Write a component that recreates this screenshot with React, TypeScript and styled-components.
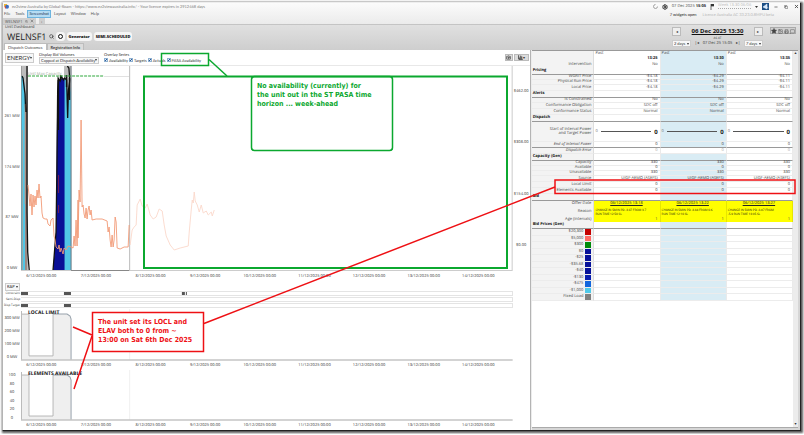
import React from "react";
import styled, { createGlobalStyle } from "styled-components";
import { Search, Star, Image as ImageIcon, Printer, MessageSquare, Settings, Camera, BarChart3, Minus, Copy, X } from "lucide-react";

const Global = createGlobalStyle`
  * { box-sizing: border-box; }
  html, body { margin: 0; background: #fff; }
  body {
    font-family: "Open Sans", "Noto Sans", sans-serif;
    font-size: 4px;
    line-height: 5px;
    color: #333;
    text-rendering: geometricPrecision;
  }
  button, select, input { font: inherit; color: inherit; margin: 0; padding: 0; border: 0; background: none; }
  svg { display: block; flex-shrink: 0; }
`;

const narrow = 'Lato, "Open Sans", sans-serif';

const Page = styled.div`
  position: relative;
  padding: 2px 3px 3px 2px;
`;

const Window = styled.div`
  display: flex;
  flex-direction: column;
  border: 1px solid #b4b4b4;
  border-top-color: #eee;
  border-right: 1px solid #222;
  border-bottom: 1px solid #222;
  box-shadow: 1px 1px 2px 1px #555;
  background: #d6d6d6;
`;

const TopArea = styled.header`
  display: flex;
  justify-content: space-between;
  height: 22px;
  background: linear-gradient(#fbfbfb, #ebebeb);
  border-bottom: 1px solid #c4c4c4;
`;

const Stack = styled.div`
  display: flex;
  flex-direction: column;
`;

const Bar = styled.div<{ $h: number; $gap?: number; $left?: number }>`
  display: flex;
  align-items: center;
  height: ${(p) => p.$h}px;
  gap: ${(p) => p.$gap ?? 0}px;
  padding-left: ${(p) => p.$left ?? 0}px;
  white-space: nowrap;
`;

const WindowTitle = styled.span`
  font-family: ${narrow};
  color: #808080;
`;

const MenuButton = styled.button<{ $active?: boolean }>`
  height: 6px;
  padding: 0 1px;
  font-family: ${narrow};
  line-height: 4px;
  color: ${(p) => (p.$active ? "#235" : "#555")};
  background: ${(p) => (p.$active ? "#b5dcf3" : "transparent")};
  outline: ${(p) => (p.$active ? "1px solid #6db4df" : "none")};
`;

const DocTab = styled.button`
  display: flex;
  align-items: center;
  gap: 2px;
  height: 6px;
  padding: 0 2px;
  color: #555;
  background: #cfcfcf;
`;

const Status = styled.div`
  display: flex;
  align-items: center;
  gap: 4px;
  height: 7px;
  padding-right: 1px;
  color: #444;
  white-space: nowrap;
`;

const Strong = styled.span`
  font-weight: 700;
  color: #222;
`;

const Track = styled.div`
  width: 33px;
  height: 5px;
  border-bottom: 1px dotted #aaa;
  color: #bbb;
  line-height: 4px;
  text-align: center;
  white-space: nowrap;
`;

const PlainButton = styled.button`
  display: flex;
  align-items: center;
  justify-content: center;
  min-width: 6px;
  height: 6px;
`;

const Notes = styled.div`
  display: flex;
  gap: 6px;
  height: 9px;
  align-items: center;
  padding-left: 17px;
  font-family: ${narrow};
  color: #222;
  white-space: nowrap;
`;

const Faded = styled.span`
  color: #b8b8b8;
`;

const UnitHeader = styled.section`
  display: flex;
  justify-content: space-between;
  height: 25px;
  background: linear-gradient(#e0e0e0, #cecece);
`;

const UnitName = styled.h1`
  margin: 0;
  font-size: 9px;
  line-height: 12px;
  font-weight: 400;
  color: #222;
`;

const Pill = styled.button<{ $round?: boolean }>`
  display: flex;
  align-items: center;
  justify-content: center;
  height: 9px;
  padding: 0 ${(p) => (p.$round ? 1 : 2)}px;
  border-radius: 3px;
  background: #f6f6f6;
  color: #111;
  font-weight: 800;
`;

const Tab = styled.button<{ $active?: boolean }>`
  height: 7px;
  padding: 0 3px;
  border: 1px solid #bdbdbd;
  border-bottom: 0;
  font-family: ${narrow};
  line-height: 5px;
  font-weight: ${(p) => (p.$active ? 400 : 700)};
  background: ${(p) => (p.$active ? "#fff" : "#dcdcdc")};
  color: #444;
`;

const TimeNav = styled.div`
  display: flex;
  gap: 7px;
  padding: 2px 4px 0 0;
`;

const TimeColumn = styled.div`
  display: flex;
  flex-direction: column;
  width: 91px;
`;

const Spread = styled.div`
  display: flex;
  align-items: center;
  justify-content: space-between;
  white-space: nowrap;
`;

const BigTime = styled.button`
  font-size: 6px;
  line-height: 9px;
  font-weight: 700;
  color: #111;
  text-decoration: underline;
`;

const Caption = styled.div`
  text-align: center;
  font-size: 3px;
  line-height: 4px;
`;

const StepButton = styled.button`
  width: 9px;
  height: 9px;
  border: 1px solid #bbb;
  background: #eee;
  line-height: 4px;
`;

const IconGroup = styled.div`
  display: flex;
  height: 7px;
  border: 1px solid #aaa;
  background: #d0d0d0;
  color: #444;
`;

const Field = styled.span<{ $w: number; $h: number; $size?: number }>`
  position: relative;
  display: inline-flex;
  align-items: center;
  width: ${(p) => p.$w}px;
  height: ${(p) => p.$h}px;
  border: 1px solid #ccc;
  background: #f7f7f7;
  font-family: ${narrow};
  font-size: ${(p) => p.$size ?? 4}px;
  color: #333;
  &::after {
    content: "";
    position: absolute;
    right: 1px;
    border: 1px solid transparent;
    border-top: 2px solid #333;
    border-bottom: 0;
    pointer-events: none;
  }
`;

const Select = styled.select`
  appearance: none;
  width: 100%;
  height: 100%;
  padding-left: 1px;
  line-height: 5px;
`;

const Main = styled.main`
  display: grid;
  grid-template-columns: 526fr 2px 268fr;
`;

const Left = styled.section`
  min-width: 0;
  background: #fff;
`;

const Splitter = styled.div`
  background: #ececec;
  border-left: 1px solid #b4b4b4;
`;

const Toolbar = styled.div`
  display: flex;
  align-items: center;
  gap: 5px;
  height: 16px;
  padding: 0 1px 0 2px;
  border-bottom: 1px solid #e8e8e8;
  font-family: ${narrow};
`;

const LabelText = styled.label`
  line-height: 5px;
  height: 5px;
  white-space: nowrap;
`;

const Check = styled.label`
  display: flex;
  align-items: center;
  gap: 1px;
  white-space: nowrap;
`;

const Tick = styled.input`
  appearance: none;
  width: 4px;
  height: 4px;
  border: 1px solid #8fb0d0;
  background: #dfeaf6;
  &:checked { background: linear-gradient(135deg, #dfeaf6 40%, #2c5c99 40% 65%, #dfeaf6 65%); }
`;

const ToolIcons = styled.div`
  display: flex;
  gap: 1px;
  margin-left: auto;
`;

const ToolButton = styled.button<{ $w: number }>`
  display: flex;
  align-items: center;
  justify-content: center;
  width: ${(p) => p.$w}px;
  height: 7px;
  border: 1px solid #bbb;
  background: #dcdcdc;
  color: #333;
`;

const ChartRow = styled.div`
  display: grid;
  grid-template-columns: 18px minmax(0, 1fr) 17px;
`;

const Axis = styled.div<{ $top: number; $bottom: number }>`
  display: flex;
  flex-direction: column;
  justify-content: space-between;
  padding: ${(p) => p.$top}px 1px ${(p) => p.$bottom}px 1px;
  line-height: 4px;
  text-align: center;
  white-space: nowrap;
`;

const Plot = styled.div<{ $h: number }>`
  position: relative;
  height: ${(p) => p.$h}px;
  svg { width: 100%; height: 100%; }
`;

const PlotTitle = styled.h2<{ $soft?: boolean }>`
  position: absolute;
  top: ${(p) => (p.$soft ? 6 : 2)}px;
  left: 7px;
  margin: 0;
  font-size: ${(p) => (p.$soft ? 4 : 5)}px;
  line-height: 5px;
  font-weight: ${(p) => (p.$soft ? 400 : 700)};
  color: ${(p) => (p.$soft ? "#9aa89a" : "#111")};
  white-space: nowrap;
`;

const Dates = styled.div<{ $h: number }>`
  display: grid;
  grid-template-columns: repeat(9, 1fr);
  margin: 0 24px 0 11px;
  height: ${(p) => p.$h}px;
  line-height: ${(p) => p.$h}px;
  text-align: center;
  white-space: nowrap;
`;

const StripLabel = styled.span`
  font-size: 3px;
  line-height: 5px;
  text-align: right;
  padding-right: 1px;
  white-space: nowrap;
`;

const Strip = styled.div`
  height: 5px;
  margin-bottom: 1px;
  border: 1px solid #e4e4e4;
  border-left: 0;
  svg { width: 100%; height: 100%; }
`;

const Right = styled.section`
  display: grid;
  grid-template-columns: minmax(0, 1fr) 5px;
  min-width: 0;
  margin-right: 2px;
  margin-bottom: 2px;
  border-top: 1px solid #999;
  border-bottom: 1px solid #aaa;
  background: #fff;
  align-items: start;
`;

const ScrollTrack = styled.div`
  display: flex;
  flex-direction: column;
  justify-content: space-between;
  align-items: center;
  height: 100%;
  background: #ececec;
`;

const Table = styled.table`
  width: 100%;
  table-layout: fixed;
  border-collapse: separate;
  border-spacing: 0;
  line-height: 4px;
  white-space: nowrap;
`;

const LabelCol = styled.col`
  width: 24%;
`;

const Row = styled.tr<{ $h: number; $rule?: boolean; $faint?: boolean }>`
  height: ${(p) => p.$h}px;
  th, td {
    height: ${(p) => p.$h}px;
    border-bottom: ${(p) => (p.$rule ? "1px solid #999" : p.$faint ? "1px solid #ececec" : "0")};
  }
`;

const Label = styled.th<{ $group?: boolean; $italic?: boolean }>`
  padding: 0 ${(p) => (p.$group ? 0 : 2)}px 0 1px;
  text-align: ${(p) => (p.$group ? "left" : "right")};
  font-weight: ${(p) => (p.$group ? 700 : 400)};
  font-style: ${(p) => (p.$italic ? "italic" : "normal")};
  color: ${(p) => (p.$group ? "#111" : "#444")};
  background: #f3f3f3;
  border-right: 1px solid #ddd;
`;

const Cell = styled.td<{ $tone?: "blue" | "yellow"; $align?: string; $bold?: boolean; $dim?: boolean; $small?: boolean }>`
  padding: 0 ${(p) => (p.$small ? 0 : 2)}px 0 1px;
  font-size: ${(p) => (p.$small ? 3 : 4)}px;
  text-align: ${(p) => p.$align ?? "right"};
  font-weight: ${(p) => (p.$bold ? 700 : 400)};
  color: ${(p) => (p.$dim ? "#aaa" : p.$bold || p.$small ? "#111" : "#444")};
  background: ${(p) => (p.$tone === "yellow" ? "#ffff00" : p.$tone === "blue" ? "#d9ecf4" : "#fff")};
  border-right: 1px solid ${(p) => (p.$tone === "yellow" ? "#e6e600" : "#eaeaea")};
`;

const PowerLine = styled.div`
  display: flex;
  align-items: center;
  gap: 3px;
  color: #777;
  &::before { content: "0"; }
`;

const PowerBar = styled.span`
  flex: 1;
  height: 1px;
  background: #555;
`;

const PowerValue = styled.b`
  font-size: 6px;
  line-height: 6px;
  color: #111;
`;

const OfferLink = styled.a`
  color: #222;
  text-decoration: underline;
`;

const PriceLabel = styled.div`
  display: flex;
  align-items: center;
  justify-content: flex-end;
  gap: 2px;
`;

const Swatch = styled.span<{ $color: string; $h: number }>`
  width: 6px;
  height: ${(p) => p.$h}px;
  background: ${(p) => p.$color};
`;

const Overlay = styled.div`
  position: absolute;
  inset: 0;
  pointer-events: none;
  overflow: hidden;
`;

const Lines = styled.svg`
  position: absolute;
  left: 0;
  top: 0;
`;

const Callout = styled.div<{ $x: number; $y: number; $w: number; $h: number; $color: string; $radius?: number }>`
  position: absolute;
  left: ${(p) => p.$x}px;
  top: ${(p) => p.$y}px;
  width: ${(p) => p.$w}px;
  height: ${(p) => p.$h}px;
  padding: 5px;
  border: 1px solid ${(p) => p.$color};
  border-radius: ${(p) => p.$radius ?? 0}px;
  background: #fff;
  color: ${(p) => p.$color};
  font-family: "DejaVu Sans Condensed", "DejaVu Sans", sans-serif;
  font-weight: 700;
  font-size: 7px;
  line-height: 9px;
  white-space: nowrap;
`;

const GREEN = "#0ba82f";
const RED = "#ee1014";

const dates = [6, 7, 8, 9, 10, 11, 12, 13, 14].map((d) => `${d}/12/2025 00:00`);

const trace =
  "28,185 29,195 30,206 31,194 32,215 33,195 34,207 35,196 36,205 37,190 38,198 39,184 40,198 41,196 42,213 43,218 45,219 47,219 48,224 50,226 51,220 53,218 54,236 55,240 56,247 58,249 59,245 60,252 61,248 63,254 64,248 66,250 68,246 71,247 73,248 74,236 75,246 76,220 77,246 78,200 78,238 79,190 80,202 81,120 82,207 83,205 84,214 85,218 86,208 87,219 88,210 89,206 90,215 91,210 92,220 96,219 102,219 107,221 108,232 109,227 110,240 111,247 112,235 113,247 114,240 115,217 116,222 117,248 120,249 124,247 128,247 129,225";
const forecast =
  "130,245 132,230 134,227 136,225 137,205 138,203 140,199 142,206 145,208 147,204 149,211 150,215 153,219 156,217 159,209 162,211 164,225 166,236 170,245 174,250 180,248 188,246 189,232 191,210 192,200 193,203 194,192 195,201 197,205 199,212 201,205 203,213 206,211 208,215 211,212 212,216 214,210";

function DateRow({ h }: { h: number }) {
  return (
    <Dates $h={h}>
      {dates.map((d) => (
        <span key={d}>{d}</span>
      ))}
    </Dates>
  );
}

function MainPlot() {
  return (
    <svg viewBox="21 66 491 205" preserveAspectRatio="none">
      <rect x="21" y="66" width="7" height="205" fill="#bcbcbc" />
      <rect x="64" y="66" width="7" height="205" fill="#bcbcbc" />
      <path d="M21 76h2l2 12v183h-4z" fill="#52c6e6" />
      <path d="M25 90l2 14v167h-2z" fill="#9a8a84" />
      <path d="M22 76l1 2 2 16 .7 18M27 66v146l.7 40 1.500 18" fill="none" stroke="#111" strokeWidth="1.300" />
      <path d="M22.500 130v140M25 104v100" stroke="#d98b6c" strokeWidth=".5" fill="none" />
      <path d="M53 271l3-39 1-120 1-34 2 2 3-2 2 2v191z" fill="#0a0f96" />
      <path d="M64.500 79h2l1 26 2-10 1.500-8v184h-6.500z" fill="#52c6e6" />
      <path d="M53 270l3-38 .8-60 .8-80 .5-14 2 3 1.500-4 2 3 1-2 2 2 1 38 .8-28 1.400-10-1-12-1.500-2" fill="none" stroke="#111" strokeWidth="1.300" />
      <path d="M58.300 80v50" stroke="#111" strokeWidth="1.500" />
      <path d="M60.500 75v5M66.500 75v12M69.500 78v22" stroke="#111" strokeWidth="1.500" />
      <path d="M58.500 175v18M58.500 205v8" stroke="#c0282c" strokeWidth=".6" />
      <path d="M71 66v205" stroke="#6c7780" />
      <path d="M28 76h76" stroke="#2fa83c" strokeDasharray="3 1" />
      <path d="M104 76.500h25" stroke="#ccc" strokeWidth=".6" />
      <path d="M129.500 66v205" stroke="#bbb" />
      <path d="M21.500 66v205" stroke="#888" strokeWidth=".6" />
      <path d="M21 270.500h491M511.500 66v205" stroke="#ccc" fill="none" />
      <path d="M71 270.500h58" stroke="#888" />
      <polyline points={trace} fill="none" stroke="#f29a76" strokeWidth=".9" />
      <polyline points={forecast} fill="none" stroke="#fbd8cb" strokeWidth=".9" />
    </svg>
  );
}

function StepPlot() {
  return (
    <svg viewBox="21 0 491 51" preserveAspectRatio="none">
      <path d="M21 50V5h8v41h24V5h15l3 4v41z" fill="#efefef" />
      <path d="M21 5h8v41h24V5" fill="none" stroke="#a8a8a8" strokeWidth=".8" />
      <path d="M53 5h14l3 2 1 3v40" fill="none" stroke="#98a2ac" />
      <path d="M21.500 2v48" stroke="#bbb" />
      <path d="M129.500 0v50" stroke="#f0f0f0" />
      <path d="M21 50h491" stroke="#c4c4c4" strokeWidth="1.500" />
    </svg>
  );
}

type Values = [string, string, string];
const tones: (undefined | "blue")[] = [undefined, "blue", undefined];

function DataRow({ label, values, h, bold, rule, italic, align, dim, faint = true }: {
  label: string; values: Values; h: number; bold?: boolean; rule?: boolean; italic?: boolean; align?: string; dim?: boolean; faint?: boolean;
}) {
  return (
    <Row $h={h} $rule={rule} $faint={faint}>
      <Label scope="row" $italic={italic}>{label}</Label>
      {values.map((v, i) => (
        <Cell key={i} $tone={dim ? undefined : tones[i]} $bold={bold} $align={align} $dim={dim}>{v}</Cell>
      ))}
    </Row>
  );
}

function GroupRow({ label }: { label: string }) {
  return (
    <Row $h={7} $rule>
      <Label scope="row" $group>{label}</Label>
      {tones.map((t, i) => <Cell key={i} $tone={t} />)}
    </Row>
  );
}

const same = (v: string): Values => [v, v, v];

const offers = ["06/12/2025 13:18", "06/12/2025 13:22", "06/12/2025 13:27"];
const reasons = [
  ["CHANGE IN 5MIN PD -3.87 FROM 3.7", "RUN TIME 12:50 SL"],
  ["CHANGE IN 5MIN PD -3.84 FROM 0.6", "RUN TIME 12:10 SL"],
  ["CHANGE IN 5MIN PD -3.87 FROM", "-5.9 RUN TIME 13:05 SL"],
];
const bands: [string, string][] = [
  ["$20,300", "#c40000"], ["$5,000", "#ff6b66"], ["$300", "#008a0a"], ["$0", "#06129a"],
  ["-$25", "#06129a"], ["-$35.68", "#06129a"], ["-$40", "#06129a"], ["-$130", "#0a1fae"],
  ["-$475", "#1166dd"], ["-$1,000", "#4ec9e9"], ["Fixed Load", "#808080"],
];

function DispatchTable() {
  return (
    <Table>
      <colgroup>
        <LabelCol />
        <col /><col /><col />
      </colgroup>
      <tbody>
        <DataRow label="" values={same("Past")} h={5} align="left" faint={false} />
        <DataRow label="" values={["13:25", "13:30", "13:35"]} h={6} bold faint={false} />
        <DataRow label="Intervention" values={same("No")} h={6} faint={false} />
        <GroupRow label="Pricing" />
        <DataRow label="WGRIT Price" values={["-$4.18", "-$4.29", "-$4.11"]} h={5} />
        <DataRow label="Physical Run Price" values={["-$4.18", "-$4.29", "-$4.11"]} h={5} />
        <DataRow label="Local Price" values={["-$4.18", "-$4.29", "-$4.11"]} h={6} />
        <GroupRow label="Alerts" />
        <DataRow label="Is Constrained" values={same("No")} h={5} />
        <DataRow label="Conformance Obligation" values={same("SDC off")} h={6} />
        <DataRow label="Conformance Status" values={same("Normal")} h={6} />
        <GroupRow label="Dispatch" />
        <Row $h={20} $faint>
          <Label scope="row">Start of Interval Power<br />and Target Power</Label>
          {tones.map((t, i) => (
            <Cell key={i} $tone={t}>
              <PowerLine><PowerBar /><PowerValue>0</PowerValue></PowerLine>
            </Cell>
          ))}
        </Row>
        <DataRow label="End of Interval Power" values={same("0")} h={6} rule italic />
        <DataRow label="Dispatch Error" values={same("0")} h={6} italic dim />
        <GroupRow label="Capacity (Gen)" />
        <DataRow label="Capacity" values={same("330")} h={5} />
        <DataRow label="Available" values={same("0")} h={5} />
        <DataRow label="Unavailable" values={same("330")} h={5} />
        <DataRow label="Source" values={same("UIGF-AEMO (ASEFS)")} h={6} />
        <DataRow label="Local Limit" values={same("0")} h={6} />
        <DataRow label="Elements Available" values={same("0")} h={6} />
        <GroupRow label="Bid" />
        <Row $h={6}>
          <Label scope="row">Offer Date</Label>
          {offers.map((o) => (
            <Cell key={o} $tone="yellow" $align="center"><OfferLink href="#">{o}</OfferLink></Cell>
          ))}
        </Row>
        <Row $h={10}>
          <Label scope="row">Reason</Label>
          {reasons.map(([a, b], i) => (
            <Cell key={i} $tone="yellow" $align="left" $small>{a}<br />{b}</Cell>
          ))}
        </Row>
        <Row $h={5}>
          <Label scope="row">Age (intervals)</Label>
          {same("1").map((v, i) => <Cell key={i} $tone="yellow">{v}</Cell>)}
        </Row>
        <GroupRow label="Bid Prices (Gen)" />
        {bands.map(([label, color], r) => (
          <Row key={label} $h={r % 2 ? 6 : 7} $faint>
            <Label scope="row"><PriceLabel>{label}<Swatch $color={color} $h={r % 2 ? 5 : 6} /></PriceLabel></Label>
            {tones.map((t, i) => <Cell key={i} $tone={t} />)}
          </Row>
        ))}
      </tbody>
    </Table>
  );
}

function Annotations() {
  return (
    <Overlay>
      <Callout $x={251} $y={76} $w={142} $h={75} $color={GREEN} $radius={3}>
        No availability (currently) for<br />the unit out in the ST PASA time<br />horizon ... week-ahead
      </Callout>
      <Callout $x={92} $y={312} $w={112} $h={40} $color={RED}>
        The unit set its LOCL and<br />ELAV both to 0 from ~<br />13:00 on Sat 6th Dec 2025
      </Callout>
      <Lines width="804" height="435">
        <g fill="none" stroke={GREEN} strokeWidth="1.500">
          <rect x="161.500" y="53.500" width="47" height="12" />
          <path d="M209 59.500l18 16.500" />
          <rect x="144" y="76.500" width="363" height="191.500" strokeWidth="2" />
          <rect x="251.500" y="76.500" width="141" height="74" rx="3" />
        </g>
        <g fill="none" stroke={RED} strokeWidth="1.500">
          <path d="M204 323.500L555 187M92 335l-19-8M92 336l-18 53" />
          <rect x="555" y="180" width="240" height="13.500" />
          <rect x="92.500" y="312.500" width="111" height="39" />
        </g>
      </Lines>
    </Overlay>
  );
}

export default function App() {
  return (
    <Page>
      <Global />
      <Window>
        <TopArea>
          <Stack>
            <Bar $h={7} $gap={3} $left={1}>
              <svg width="5" height="5" viewBox="0 0 5 5">
                <path d="M0 0h3v2.500H0z" fill="#f2b632" />
                <circle cx="3" cy="2.800" r="2" fill="#3a6fc4" />
                <path d="M0 2.500h2V5z" fill="#d8483a" />
              </svg>
              <WindowTitle>ez2view Australia by Global-Roam - https://www.ez2viewaustralia.info/ - Your licence expires in 2912468 days</WindowTitle>
            </Bar>
            <Bar $h={8} $gap={3}>
              <MenuButton>File</MenuButton>
              <MenuButton>Tools</MenuButton>
              <MenuButton $active>Screenshot</MenuButton>
              <MenuButton>Layout</MenuButton>
              <MenuButton>Window</MenuButton>
              <MenuButton>Help</MenuButton>
            </Bar>
            <Bar $h={6} $gap={3}>
              <DocTab>WELNSF1 <Copy size={3} /> <X size={4} strokeWidth={3} /></DocTab>
              <DocTab aria-label="New tab">+</DocTab>
            </Bar>
          </Stack>
          <Stack>
            <Status>
              <svg width="5" height="5" viewBox="0 0 10 10"><path d="M5 1a4 4 0 1 0 4 4" fill="none" stroke="#888" strokeWidth="1.500" /></svg>
              <Settings size={6} strokeWidth={4} color="#333" />
              <span>07 Dec 2025 <Strong>15:05</Strong></span>
              <svg width="4" height="6" viewBox="0 0 4 6"><path d="M1 0v6M1 0h3v2H1" fill="#333" stroke="#333" strokeWidth=".7" /></svg>
              <Track>Week 13:30 06/06</Track>
              <svg width="3" height="2" viewBox="0 0 3 2"><path d="M0 0h3L1.500 2z" fill="#333" /></svg>
              <svg width="7" height="7" viewBox="0 0 7 7"><path d="M0 0h7v7H0z" fill="#1b4f86" /><path d="M1 4l4-3v5zM5 4l1.500 1" fill="#cfe6ff" stroke="#fff" strokeWidth=".5" /></svg>
              <PlainButton aria-label="Minimise"><Minus size={4} strokeWidth={4} /></PlainButton>
              <PlainButton aria-label="Restore"><Copy size={4} strokeWidth={3} /></PlainButton>
              <PlainButton aria-label="Close"><X size={5} strokeWidth={4} /></PlainButton>
            </Status>
            <Notes><span>7 widgets open</span><Faded>Licence Australia AC 33.23.0.8MPU beta</Faded></Notes>
          </Stack>
        </TopArea>

        <UnitHeader>
          <Stack>
            <Bar $h={5} $left={2}>Unit Dashboard</Bar>
            <Bar $h={13} $gap={2} $left={4}>
              <UnitName>WELNSF1</UnitName>
              <Search size={5} strokeWidth={3} />
              <Pill $round aria-label="Status"><svg width="7" height="7" viewBox="0 0 7 7"><circle cx="3.500" cy="3.500" r="2" fill="none" stroke="#111" strokeWidth="1" /></svg></Pill>
              <Pill>Generator</Pill>
              <Pill>SEMI-SCHEDULED</Pill>
            </Bar>
            <Bar $h={7} $left={1}>
              <Tab $active>Dispatch Outcomes</Tab>
              <Tab>Registration Info</Tab>
            </Bar>
          </Stack>
          <TimeNav>
            <TimeColumn>
              <Spread>
                <StepButton aria-label="Previous">◂</StepButton>
                <BigTime>06 Dec 2025 13:30</BigTime>
                <StepButton aria-label="Next">▸</StepButton>
              </Spread>
              <Caption>AS AT</Caption>
              <Spread>
                <Field $w={19} $h={7}><Select aria-label="Days back"><option>2 days</option></Select></Field>
                <span>|◂</span>
                <span>07 Dec 25 15:05</span>
                <span>▸|</span>
                <Field $w={19} $h={7}><Select aria-label="Days ahead"><option>7 days</option></Select></Field>
              </Spread>
            </TimeColumn>
            <IconGroup>
              <PlainButton aria-label="Favourite"><Star size={6} fill="#444" /></PlainButton>
              <PlainButton aria-label="Image"><ImageIcon size={5} strokeWidth={2} /></PlainButton>
              <PlainButton aria-label="Print"><Printer size={5} strokeWidth={2} /></PlainButton>
              <PlainButton aria-label="Comment"><MessageSquare size={5} strokeWidth={2} /></PlainButton>
            </IconGroup>
          </TimeNav>
        </UnitHeader>

        <Main>
          <Left>
            <Toolbar>
              <Field $w={29} $h={10} $size={6}><Select aria-label="Market"><option>ENERGY</option></Select></Field>
              <Stack>
                <LabelText htmlFor="bids">Display Bid Volumes</LabelText>
                <Field $w={60} $h={7}><Select id="bids"><option>Capped at Dispatch Availability</option></Select></Field>
              </Stack>
              <Stack>
                <LabelText as="span">Overlay Series</LabelText>
                <Bar $h={7} $gap={1}>
                  {["Availability", "Targets", "Actuals", "PASA Availability"].map((n) => (
                    <Check key={n}><Tick type="checkbox" defaultChecked />{n}</Check>
                  ))}
                </Bar>
              </Stack>
              <ToolIcons>
                <ToolButton $w={8} aria-label="Snapshot"><Camera size={5} strokeWidth={3} /></ToolButton>
                <ToolButton $w={15} aria-label="Chart options"><BarChart3 size={5} strokeWidth={4} /> ▾</ToolButton>
              </ToolIcons>
            </Toolbar>

            <ChartRow>
              <Axis $top={49} $bottom={0}><span>261 MW</span><span>174 MW</span><span>87 MW</span><span>0 MW</span></Axis>
              <Plot $h={205}><MainPlot /><PlotTitle $soft>Unit Max Capacity</PlotTitle></Plot>
              <Axis $top={24} $bottom={23}><span>$462.00</span><span>$308.00</span><span>$154.00</span><span>$0.00</span></Axis>
            </ChartRow>
            <DateRow h={11} />
            <Bar $h={9} $left={2}>
              <Field $w={15} $h={8}><Select aria-label="Measure"><option>RAP</option></Select></Field>
            </Bar>
            <ChartRow>
              <StripLabel>Constraint</StripLabel>
              <Strip><svg viewBox="21 0 491 4" preserveAspectRatio="none"><path d="M21 0h7v4h-7zM64 0h7v4h-7zM182 0h3v4h-3zM186 0h1v4h-1z" fill="#555" /></svg></Strip>
              <span />
              <StripLabel>Semi-Disp</StripLabel>
              <Strip />
              <span />
              <StripLabel>Disp Target</StripLabel>
              <Strip><svg viewBox="21 0 491 4" preserveAspectRatio="none"><path d="M21 0h7v4h-7zM64 0h7v4h-7z" fill="#555" /></svg></Strip>
              <span />
            </ChartRow>
            <ChartRow>
              <Axis $top={8} $bottom={1}><span>300 MW</span><span>200 MW</span><span>100 MW</span><span>0 MW</span></Axis>
              <Plot $h={52}><StepPlot /><PlotTitle>LOCAL LIMIT</PlotTitle></Plot>
            </ChartRow>
            <DateRow h={9} />
            <ChartRow>
              <Axis $top={4} $bottom={0}><span>100</span><span>80</span><span>60</span><span>40</span><span>20</span><span>0</span></Axis>
              <Plot $h={51}><StepPlot /><PlotTitle>ELEMENTS AVAILABLE</PlotTitle></Plot>
            </ChartRow>
            <DateRow h={9} />
          </Left>
          <Splitter />
          <Right>
            <DispatchTable />
            <ScrollTrack><span>▴</span><span>▾</span></ScrollTrack>
          </Right>
        </Main>
      </Window>
      <Annotations />
    </Page>
  );
}
